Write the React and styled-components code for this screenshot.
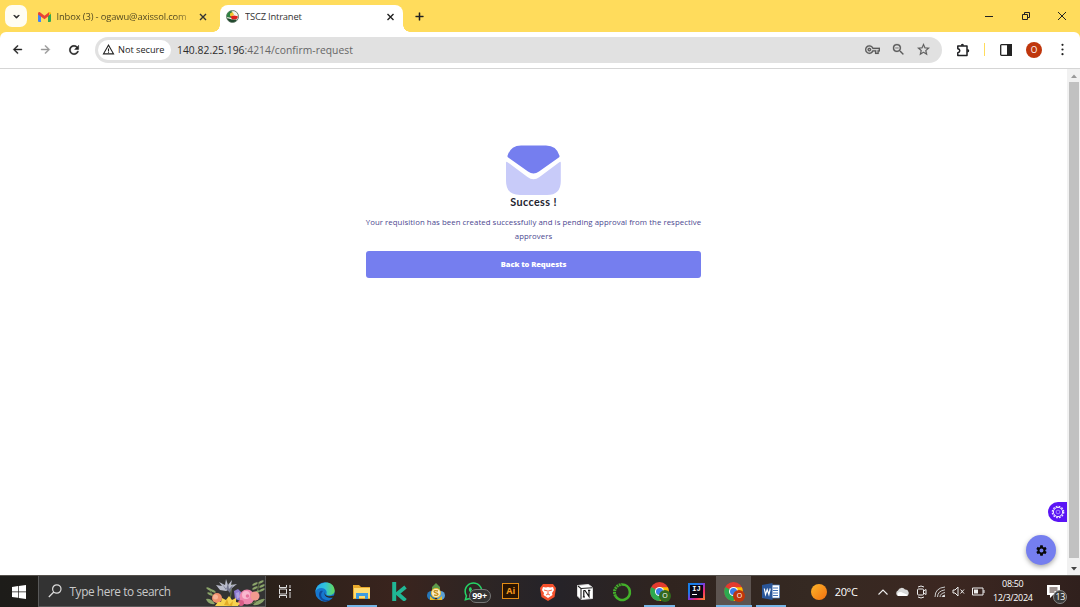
import React from 'react';
import styled, { createGlobalStyle } from 'styled-components';
import {
  MdArrowBack, MdArrowForward, MdRefresh, MdWarningAmber, MdOutlineVpnKey, MdZoomOut,
  MdStarBorder, MdSettings, MdAdd, MdKeyboardArrowDown,
} from 'react-icons/md';
import { FaWhatsapp } from 'react-icons/fa';

const Global = createGlobalStyle`
  * { box-sizing: border-box; }
  html, body { margin: 0; height: 100%; overflow: hidden; }
  body { font-family: "Open Sans", "Noto Sans", sans-serif; color: #222; background: #fff; }
  svg { display: block; flex: none; }
`;

const Screen = styled.div`
  width: 1080px;
  height: 607px;
  display: flex;
  flex-direction: column;
  background: #fff;
`;

/* ---------- browser ---------- */
const TabStrip = styled.div`
  height: 32px;
  flex: none;
  display: flex;
  align-items: flex-end;
  background: #ffdc5c;
  padding-left: 5px;
`;
const TabMenu = styled.button`
  width: 22px;
  height: 22px;
  margin: 0 0 5px;
  padding: 0;
  border: 0;
  border-radius: 7px;
  background: #fffdf3;
  display: grid;
  place-items: center;
  color: #222;
  path:not([fill="none"]) { stroke: currentColor; stroke-width: 1.5px; }
`;
const Tab = styled.div`
  position: relative;
  width: ${(p) => p.$width}px;
  height: 27px;
  display: flex;
  align-items: center;
  padding: 0 7px 4px ${(p) => (p.$active ? 6 : 11)}px;
  border-radius: 8px 8px 0 0;
  background: ${(p) => (p.$active ? '#fff' : 'transparent')};
  &::before, &::after {
    content: '';
    display: ${(p) => (p.$active ? 'block' : 'none')};
    position: absolute;
    bottom: 0;
    width: 7px;
    height: 7px;
  }
  &::before { left: -7px; background: radial-gradient(circle at 0 0, transparent 6.5px, #fff 7px); }
  &::after { right: -7px; background: radial-gradient(circle at 100% 0, transparent 6.5px, #fff 7px); }
`;
const TabTitle = styled.span`
  flex: 1;
  margin-left: ${(p) => (p.$fade ? 5.5 : 6)}px;
  overflow: hidden;
  white-space: nowrap;
  font-size: 9.4px;
  line-height: 16px;
  letter-spacing: ${(p) => p.$track}px;
  color: ${(p) => (p.$fade ? 'transparent' : '#333')};
  background: ${(p) => (p.$fade ? 'linear-gradient(90deg, #4c431f 86%, #ffdc5c 103%)' : 'none')};
  background-clip: ${(p) => (p.$fade ? 'text' : 'border-box')};
`;
const NewTab = styled.div`
  margin-left: 10px;
  height: 27px;
  padding-top: 4.5px;
  path:not([fill="none"]) { stroke: #222; stroke-width: 0.8px; }
`;
const WindowButtons = styled.div`
  margin-left: auto;
  height: 32px;
  display: grid;
  grid-template-columns: repeat(3, 36.3px);
  place-items: center;
`;
const Toolbar = styled.div`
  height: 37px;
  flex: none;
  display: flex;
  align-items: center;
  padding-bottom: 1px;
  background: #fff;
  border-bottom: 1px solid #d5d5d5;
  border-radius: 6px 6px 0 0;
`;
const ToolbarBack = styled.div`
  background: linear-gradient(#ffdc5c 50%, #fff 50%);
  flex: none;
`;
const NavButtons = styled.div`
  width: 95px;
  display: flex;
  align-items: center;
  gap: 15px;
  padding-left: 11px;
  path:not([fill="none"]) { stroke: currentColor; stroke-width: 0.8px; }
`;
const AddressBar = styled.div`
  width: 847px;
  height: 26px;
  display: flex;
  align-items: center;
  padding: 0 11px 0 3px;
  border-radius: 13px;
  background: #e1e1e1;
`;
const Security = styled.div`
  width: 73px;
  height: 20px;
  display: flex;
  align-items: center;
  gap: 3px;
  padding-left: 4px;
  border-radius: 10px;
  background: #fff;
  font-size: 9.2px;
  letter-spacing: -0.02px;
  white-space: nowrap;
  color: #222;
`;
const Address = styled.div`
  flex: 1;
  margin-left: 6px;
  font-size: 10.3px;
  color: #666;
  letter-spacing: 0.04px;
  b { font-weight: 400; color: #2b2b2b; }
`;
const AddressIcons = styled.div`
  display: flex;
  align-items: center;
  gap: 10.5px;
  color: #5b5b5b;
  path:not([fill="none"]) { stroke: currentColor; stroke-width: 0.3px; }
`;
const Extras = styled.div`
  flex: 1;
  display: flex;
  align-items: center;
  padding-left: 14px;
  color: #222;
`;
const Divider = styled.i`
  width: 1px;
  height: 13px;
  margin: 0 15px 0 13px;
  background: #ffdc5c;
`;
const Avatar = styled.span`
  width: 16px;
  height: 16px;
  margin: 0 19px 0 14px;
  border-radius: 50%;
  background: #bf360c;
  color: #fff;
  font: 8.5px/16px "Open Sans", sans-serif;
  text-align: center;
`;

/* ---------- page ---------- */
const Viewport = styled.div`
  flex: 1;
  display: flex;
  min-height: 0;
`;
const Page = styled.main`
  position: relative;
  flex: 1;
  display: flex;
  flex-direction: column;
  align-items: center;
  padding-top: 76px;
`;
const Confirmation = styled.section`
  width: 335px;
  display: flex;
  flex-direction: column;
  align-items: center;
`;
const Heading = styled.h1`
  margin: 0;
  font: 700 10.8px/13px Lato, "Open Sans", sans-serif;
  color: #23232f;
  letter-spacing: 0.4px;
  white-space: nowrap;
`;
const Message = styled.p`
  margin: 7px -10px 0;
  font-size: 7.8px;
  font-weight: 500;
  line-height: 14px;
  letter-spacing: 0.06px;
  color: #4c478f;
  text-align: center;
  white-space: nowrap;
`;
const BackButton = styled.button`
  width: 335px;
  height: 26.5px;
  margin: 8px 0 0;
  padding: 0;
  border: 0;
  border-radius: 3px;
  background: #757eef;
  color: #fff;
  font: 800 7.6px/26px "Open Sans", sans-serif;
  letter-spacing: -0.1px;
`;
const Customizer = styled.div`
  position: absolute;
  right: 0;
  top: 433px;
  width: 19px;
  height: 20px;
  padding: 3px 0 0 3px;
  border-radius: 10px 0 0 10px;
  background: #5a14f5;
`;
const SettingsFab = styled.button`
  position: absolute;
  right: 11px;
  top: 466px;
  width: 30px;
  height: 30px;
  padding: 0;
  border: 0;
  border-radius: 50%;
  display: grid;
  place-items: center;
  color: #080808;
  background: #757eef;
  box-shadow: 0 2px 5px rgba(0, 0, 0, 0.35);
`;
const Scrollbar = styled.div`
  width: 13px;
  display: flex;
  flex-direction: column;
  align-items: center;
  padding: 5px 0 4px;
  background: #f1f1f1;
`;
const Thumb = styled.div`
  width: 10px;
  height: 476px;
  margin: 4px 0 auto;
  background: #c1c1c1;
`;

/* ---------- taskbar ---------- */
const Taskbar = styled.footer`
  height: 32px;
  flex: none;
  display: flex;
  background: linear-gradient(90deg, #1d1c19 0, #292019 24%, #3a241e 37%, #2d2524 45%, #252329 51%, #30241f 62%, #352922 75%, #3c2721 88%, #30201d 100%);
  border-top: 1px solid #54504b;
  color: #fff;
`;
const Start = styled.div`
  width: 38px;
  display: grid;
  place-items: center;
`;
const Search = styled.div`
  width: 228px;
  display: flex;
  align-items: center;
  padding-left: 9px;
  background: #333;
  border: 1px solid #595959;
  border-top: 0;
  color: #c9c9c9;
  font-size: 11.8px;
  letter-spacing: -0.39px;
  white-space: nowrap;
  span { flex: 1; margin-left: 7.5px; }
`;
const TaskView = styled.div`
  width: 40.3px;
  display: grid;
  place-items: center;
  padding-right: 2px;
`;
const TaskItem = styled.div`
  position: relative;
  width: 37.2px;
  display: grid;
  place-items: center;
  background: ${(p) => (p.$active ? 'linear-gradient(90deg, transparent 1px, #5d5450 1px, #5d5450 36px, transparent 36px)' : 'none')};
  &::after {
    content: '';
    position: absolute;
    left: ${(p) => (p.$active ? 1 : 3.5)}px;
    right: ${(p) => (p.$active ? 1 : 3.5)}px;
    bottom: 0;
    height: 2px;
    background: ${(p) => (p.$open || p.$active ? '#76b5e6' : 'transparent')};
  }
`;
const CountBadge = styled.span`
  position: absolute;
  left: 13.5px;
  top: 13px;
  width: 22px;
  height: 14px;
  border: 1px solid #777;
  border-radius: 7px;
  background: #333;
  font: 700 9px/12px "Open Sans", sans-serif;
  letter-spacing: -0.3px;
  text-align: center;
`;
const ProfileBadge = styled.span`
  position: absolute;
  left: 18px;
  top: 14px;
  width: 12px;
  height: 12px;
  border-radius: 50%;
  background: ${(p) => p.$color};
  font: 7px/12px "Open Sans", sans-serif;
  text-align: center;
`;
const AiTile = styled.span`
  width: 17px;
  height: 16px;
  margin-bottom: 2px;
  border: 1.5px solid #e48c14;
  background: #2a1400;
  color: #f79a1c;
  font: 700 9px/13px "Open Sans", sans-serif;
  text-align: center;
`;
const IdeaTile = styled.span`
  width: 17px;
  height: 17px;
  padding: 2px;
  background: linear-gradient(135deg, #197de8 30%, #7c3ce0 50%, #f2296b 70%, #f98b2a);
`;
const IdeaInner = styled.span`
  display: block;
  width: 13px;
  height: 13px;
  padding-left: 2px;
  background: #090714;
  font: 700 7px/8px "Liberation Mono", monospace;
  span { display: block; width: 5px; height: 1px; margin-top: 1px; background: #fff; }
`;
const Weather = styled.div`
  display: flex;
  align-items: center;
  gap: 8px;
  margin-left: 21px;
  width: 67px;
  font-size: 11px;
  letter-spacing: -0.35px;
  white-space: nowrap;
`;
const Sun = styled.i`
  width: 16px;
  height: 16px;
  border-radius: 50%;
  background: linear-gradient(135deg, #fdb52a, #f2700f);
`;
const Tray = styled.div`
  display: flex;
  align-items: center;
  gap: 7px;
`;
const Clock = styled.div`
  width: 50px;
  margin-left: 3px;
  padding-top: 1px;
  font-size: 9px;
  line-height: 14px;
  letter-spacing: -0.33px;
  text-align: center;
  white-space: nowrap;
`;
const Notices = styled.div`
  position: relative;
  margin-left: 9.5px;
  padding-top: 9px;
`;
const NoticeCount = styled.span`
  position: absolute;
  left: 6px;
  top: 14px;
  width: 14px;
  height: 14px;
  border-radius: 50%;
  border: 1px solid #888;
  background: #3a3a3a;
  font: 8.8px/12px "Open Sans", sans-serif;
  letter-spacing: -0.4px;
  text-align: center;
`;

/* ---------- drawings ---------- */
const Gmail = () => (
  <svg width="13" height="10" viewBox="0 0 13 10">
    <path d="M0 1.5V9q0 1 1 1h2V4z" fill="#4285f4" />
    <path d="M13 1.5V9q0 1-1 1h-2V4z" fill="#34a853" />
    <path d="M10 4V1l1-.8q2-.7 2 1.6z" fill="#fbbc04" />
    <path d="M0 1.8Q0-.5 2 .3L6.500 3.700 11 .3v3.500L6.500 7.200 0 2.500z" fill="#ea4335" />
  </svg>
);
const SiteIcon = () => (
  <svg width="13" height="13" viewBox="0 0 13 13">
    <circle cx="6.500" cy="6.500" r="6" fill="#f3f3ea" stroke="#58705f" strokeWidth=".9" />
    <path d="M.8 7Q.5 2.500 4.500 1l2 .5L5 5 6 8z" fill="#2f8040" />
    <path d="M4 3.500L6.500 2 8 4.500 6 6.500 4 6z" fill="#f2c52e" />
    <path d="M4.500 6.500L8 5.500l3.800.8Q12 9 10 9.500L6 9.500z" fill="#e0201b" />
    <path d="M1 8l5 1.500 5 .3Q9.500 12.300 6.500 12.300 2.500 12.300 1 8z" fill="#22492f" />
  </svg>
);
const Puzzle = () => (
  <svg width="15" height="14" viewBox="0 0 15 14">
    <path d="M1.800 3H11V12.500H1.800V9.700Q3.800 9.400 3.800 7.750 3.800 6.100 1.800 5.800Z" fill="none" stroke="#1f2023" strokeWidth="1.500" strokeLinejoin="round" />
    <path d="M4.800 2.700a1.600 1.900 0 0 1 3.200 0zM11.300 6.100a1.900 1.600 0 0 1 0 3.300z" fill="#1f2023" />
  </svg>
);
const Envelope = () => (
  <svg width="55" height="50" viewBox="0 0 55 50">
    <path d="M1.500 10.800Q4.500 .5 15 .5H40Q50.500 .5 53.500 10.800 53.700 12 52.800 12.600L33 26.400Q27.500 30.400 22 26.400L2.200 12.600Q1.300 12 1.500 10.800Z" fill="#757eef" />
    <path d="M0 18Q0 16 1.500 17.200L21.500 32Q27.500 36.500 33.500 32L53.300 17.200Q54.800 16 54.800 18V36Q54.800 50 41 50H14Q0 50 0 36Z" fill="#c8cbf9" />
  </svg>
);
const Flower = () => (
  <svg width="60" height="29" viewBox="0 0 60 29">
    <g stroke="#6f8a4a" strokeWidth=".8" fill="none"><path d="M12 26L4 12M50 25l4-18M25 25l2-18M45 27l14-5" /></g>
    <g fill="#8ba46a">
      {[[4, 12], [8, 14], [5, 17], [50, 7], [56, 5], [50, 11], [57, 9], [52, 15], [57, 13]].map(([x, y]) => (
        <ellipse key={`${x}-${y}`} cx={x} cy={y} rx="3" ry="1.200" transform={`rotate(${x < 30 ? 28 : -28} ${x} ${y})`} />
      ))}
      <path d="M1 22q5-1 9 5-7 1-9-5zM48 28q5-6 12-6-4 7-12 6z" />
    </g>
    <path d="M11 8l6 1-3-4 6 3 1-6 2 6 4-5-1 5 6-1-5 4-6 3-6-1z" fill="#b9bccb" />
    <path d="M17 7l4 6 2-7 1 6 4-4-3 8z" fill="#74778f" />
    <circle cx="12" cy="21" r="5" fill="#ee916c" /><circle cx="10.500" cy="20" r="2.500" fill="#f9b497" />
    <path d="M29 14l4-2 3 3v9l-6-2z" fill="#8b7bd1" /><path d="M31 16l3-1 1 5-3 2z" fill="#aea1e2" />
    <circle cx="42" cy="20" r="7.500" fill="#ee86ad" /><circle cx="50" cy="19" r="4.500" fill="#f29a8f" />
    <circle cx="41" cy="18" r="4" fill="#f9b8cf" /><circle cx="42.500" cy="19" r="1.800" fill="#e5729d" />
    <circle cx="36" cy="26" r="3" fill="#d95c86" />
    <path d="M10 29l3-4 3 0 1-4 4 2 3-4 3 4 4-2 0 4 4 1-2 3z" fill="#f7d34e" />
    <path d="M19 28l3-6 2 6 4-4-1 5z" fill="#e2ac26" />
  </svg>
);
const Edge = () => (
  <svg width="20" height="20" viewBox="0 0 20 20">
    <defs>
      <linearGradient id="edgeTop" x1="0" x2="1"><stop offset="0" stopColor="#2aa9ea" /><stop offset=".5" stopColor="#2fc3dc" /><stop offset="1" stopColor="#65d957" /></linearGradient>
    </defs>
    <circle cx="10" cy="10" r="9.700" fill="#1677cf" />
    <path d="M.4 10C1-1.500 19-3.500 19.700 8.500c0 4-4 5.300-7.500 4.500-1.500-.5-.5-1.500-.5-3C11 5 2 4.500.4 10z" fill="url(#edgeTop)" />
    <path d="M8 9c-5 5 1 11 8 8.500-7 5-14-1.500-11.500-7.200C5.500 8.500 7 8.500 8 9z" fill="#104a9b" />
    <path d="M10.500 9.200c-2.500 3.500 2.500 6.500 8 4.300l1.300.3-1 1.700C12 17 7.500 13 10.500 9.200z" fill="#2d241f" />
  </svg>
);
const Folder = () => (
  <svg width="18" height="16" viewBox="0 0 18 16">
    <path d="M0 1h6l2 2h9v12H0z" fill="#e9a92b" /><path d="M1 4h16v10H1z" fill="#ffdb70" />
    <path d="M3 15V9h12v6h-3v-3H6v3z" fill="#3e9be0" />
  </svg>
);
const Kaspersky = () => (
  <svg width="15" height="19" viewBox="0 0 15 19" fill="none" stroke="#20b795" strokeWidth="4">
    <path d="M2.200 0v19" /><path d="M13.500 5L5.500 11.500 13.500 18.500" strokeWidth="3.800" />
  </svg>
);
const MetaTrader = () => (
  <svg width="18" height="18" viewBox="0 0 18 18">
    <path d="M5 4l4-4 4 4v4H5z" fill="#5f9b4b" /><circle cx="4.500" cy="12.500" r="4.500" fill="#2777b8" />
    <circle cx="13.500" cy="12.500" r="4.500" fill="#5aa0d4" /><path d="M3 13q6 7 12 0v4H3z" fill="#e5bd29" />
    <circle cx="9" cy="10" r="5" fill="#f1c13a" /><circle cx="9" cy="10" r="4" fill="#f9efc8" />
    <path d="M11 8q-4-1-4 .6c0 1.700 4 1 4 2.800q-1 1.600-4 .4" fill="none" stroke="#c8901f" strokeWidth="1.300" />
  </svg>
);
const Brave = () => (
  <svg width="16" height="18" viewBox="0 0 16 18">
    <path d="M3 1h10l3 4-1.500 9L8 18l-6.500-4L0 5z" fill="#f4512c" />
    <path d="M3 4l3 .5 2-.5 2 .5 3-.5 1 3-2 3 .5 2L8 15l-4.500-3L4 10 2 7z" fill="#fff" />
    <path d="M4 7l3 .8M12 7L9 7.800M8 7v4M6 12l2-1 2 1" stroke="#f4512c" strokeWidth=".9" fill="none" />
  </svg>
);
const Notion = () => (
  <svg width="16" height="16" viewBox="0 0 16 16">
    <path d="M.5 1.500L11.500.5 15.500 3.500V14.500L4 15.500.5 12z" fill="#fff" stroke="#ddd" />
    <path d="M1 2l3 2.500v10.800M4 4.500l11.500-.8" fill="none" stroke="#222" strokeWidth="1.100" />
    <path d="M6.500 6.500h1.500l4 6V6.300M6.800 6.500v6.500M5.800 13h2.200M11 6.300h2.300" fill="none" stroke="#111" strokeWidth="1.200" />
  </svg>
);
const Anaconda = () => (
  <svg width="20" height="20" viewBox="0 0 20 20" fill="none" stroke="#43b02a">
    <path d="M10 2.500A7.700 7.700 0 1 1 3.500 14" strokeWidth="2.600" />
    <path d="M3.500 14A7.700 7.700 0 0 1 10 2.500" strokeWidth="3" strokeDasharray="1.800 .7" />
  </svg>
);
const Chrome = () => (
  <svg width="19" height="19" viewBox="0 0 19 19">
    <circle cx="9.500" cy="9.500" r="9.400" fill="#e33b2e" />
    <path d="M9.500 9.500L1.300 4.900A9.400 9.400 0 0 0 9.500 18.900L13.500 12z" fill="#2da94f" />
    <path d="M9.500 5.200h8.300A9.400 9.400 0 0 1 9.500 18.900l4-7z" fill="#fdbd00" />
    <circle cx="9.500" cy="9.500" r="4.500" fill="#fff" /><circle cx="9.500" cy="9.500" r="3.500" fill="#3a7de8" />
  </svg>
);
const Word = () => (
  <svg width="18" height="17" viewBox="0 0 18 17">
    <path d="M9 2h8.500v13H9z" fill="#fff" stroke="#4c83c7" strokeWidth=".7" />
    <path d="M11 5h5M11 7.500h5M11 10h5M11 12.500h5" stroke="#3e6fb5" />
    <path d="M0 2l10.500-2v17L0 15z" fill="#2a5699" />
    <path d="M2.300 5.500l1.200 6 1.700-5 1.700 5 1.300-6" fill="none" stroke="#fff" strokeWidth="1.200" />
  </svg>
);

const apps = [
  { id: 'edge', icon: <Edge /> },
  { id: 'files', icon: <Folder />, open: true },
  { id: 'kaspersky', icon: <Kaspersky /> },
  { id: 'metatrader', icon: <MetaTrader /> },
  { id: 'whatsapp', icon: <><FaWhatsapp size={21} color="#25d366" /><CountBadge>99+</CountBadge></> },
  { id: 'illustrator', icon: <AiTile>Ai</AiTile> },
  { id: 'brave', icon: <Brave /> },
  { id: 'notion', icon: <Notion /> },
  { id: 'anaconda', icon: <Anaconda /> },
  { id: 'chrome', icon: <><Chrome /><ProfileBadge $color="#33691e">O</ProfileBadge></>, open: true },
  { id: 'idea', icon: <IdeaTile><IdeaInner>IJ<span /></IdeaInner></IdeaTile> },
  { id: 'chrome-work', icon: <><Chrome /><ProfileBadge $color="#bf360c">O</ProfileBadge></>, active: true },
  { id: 'word', icon: <Word />, open: true },
];

export default function App() {
  return (
    <Screen>
      <Global />
      <TabStrip>
        <TabMenu aria-label="Search tabs"><MdKeyboardArrowDown size={11} /></TabMenu>
        <Tab $width={193}>
          <Gmail />
          <TabTitle $fade $track={-0.13}>Inbox (3) - ogawu@axissol.com</TabTitle>
          <svg width="19" height="12" viewBox="0 0 19 12"><path d="M6 3l6 6M12 3l-6 6" stroke="#333" strokeWidth="1.400" /></svg>
        </Tab>
        <Tab $active $width={183}>
          <SiteIcon />
          <TabTitle $track={-0.19}>TSCZ Intranet</TabTitle>
          <svg width="11" height="12" viewBox="0 0 11 12"><path d="M2.500 3l6 6M8.500 3l-6 6" stroke="#222" strokeWidth="1.400" /></svg>
        </Tab>
        <NewTab><MdAdd size={13} /></NewTab>
        <WindowButtons>
          <svg width="10" height="10"><path d="M1 5.500h8" stroke="#222" /></svg>
          <svg width="10" height="10" fill="none" stroke="#222"><path d="M1.500 3.500h5v5h-5zM3.500 3.500v-2h5v5h-2" /></svg>
          <svg width="10" height="10" stroke="#222"><path d="M1 1l8 8M9 1l-8 8" /></svg>
        </WindowButtons>
      </TabStrip>
      <ToolbarBack>
        <Toolbar>
          <NavButtons>
            <MdArrowBack size={13} />
            <MdArrowForward size={13} color="#999" />
            <MdRefresh size={14} />
          </NavButtons>
          <AddressBar>
            <Security><MdWarningAmber size={13} />Not secure</Security>
            <Address><b>140.82.25.196</b>:4214/confirm-request</Address>
            <AddressIcons>
              <MdOutlineVpnKey size={15} />
              <MdZoomOut size={15} />
              <MdStarBorder size={15} />
            </AddressIcons>
          </AddressBar>
          <Extras>
            <Puzzle />
            <Divider />
            <svg width="12" height="12" viewBox="0 0 12 12"><rect x=".7" y=".7" width="10.600" height="10.600" rx=".8" fill="none" stroke="#222" strokeWidth="1.300" /><path d="M7 0h5v12H7z" fill="#222" /></svg>
            <Avatar>O</Avatar>
            <svg width="3" height="13" viewBox="0 0 3 13" fill="#222"><circle cx="1.500" cy="1.800" r="1.100" /><circle cx="1.500" cy="6.500" r="1.100" /><circle cx="1.500" cy="11.200" r="1.100" /></svg>
          </Extras>
        </Toolbar>
      </ToolbarBack>
      <Viewport>
        <Page>
          <Confirmation>
            <Envelope />
            <Heading>Success !</Heading>
            <Message>
              Your requisition has been created successfully and is pending approval from the respective
              <br />
              approvers
            </Message>
            <BackButton>Back to Requests</BackButton>
          </Confirmation>
          <Customizer>
            <svg width="14" height="14" viewBox="0 0 14 14" fill="none" stroke="#ece4ff">
              <circle cx="7" cy="7" r="5.600" strokeWidth="1.500" strokeDasharray="1.700 1.230" />
              <circle cx="7" cy="7" r="4.600" /><circle cx="7" cy="7" r="1.900" strokeWidth=".8" stroke="#b79cff" />
            </svg>
          </Customizer>
          <SettingsFab aria-label="Settings"><MdSettings size={13} /></SettingsFab>
        </Page>
        <Scrollbar>
          <svg width="6" height="4"><path d="M0 4l3-3.500L6 4z" fill="#999" /></svg>
          <Thumb />
          <svg width="6" height="4"><path d="M0 0l3 3.500L6 0z" fill="#444" /></svg>
        </Scrollbar>
      </Viewport>
      <Taskbar>
        <Start>
          <svg width="14" height="14" viewBox="0 0 14 14" fill="#fff"><path d="M0 2l6-.9v5.500H0zM6.700 1L14 0v6.600H6.700zM0 7.300h6v5.500L0 12zM6.700 7.300H14V14l-7.300-1z" /></svg>
        </Start>
        <Search>
          <svg width="14" height="14" viewBox="0 0 14 14" fill="none" stroke="#ddd" strokeWidth="1.200"><circle cx="8.800" cy="5" r="4.200" /><path d="M5.800 8L.8 13" /></svg>
          <span>Type here to search</span>
          <Flower />
        </Search>
        <TaskView>
          <svg width="14" height="13" viewBox="0 0 14 13" fill="none" stroke="#ddd"><path d="M1.500 0v2.500h7V0M1.500 13v-2.500h7V13M1.500 4v5h7V4zM12 0v3M12 7v6" /><path d="M11 4h2v2h-2z" fill="#ddd" stroke="none" /></svg>
        </TaskView>
        {apps.map((a) => (
          <TaskItem key={a.id} $open={a.open} $active={a.active}>{a.icon}</TaskItem>
        ))}
        <Weather><Sun />20°C</Weather>
        <Tray>
          <svg width="10" height="6" fill="none" stroke="#eee" strokeWidth="1.100"><path d="M.5 5.500L5 1l4.500 4.500" /></svg>
          <svg width="14" height="9" viewBox="0 0 14 9"><path d="M3 9a3 3 0 0 1 0-5.500 4 4 0 0 1 7-1A3.500 3.500 0 0 1 12 9z" fill="#d8d8d8" /><path d="M3 9q-2-4 3-4l7 3q-1 1-2 1z" fill="#fff" /></svg>
          <svg width="11" height="14" viewBox="0 0 11 14" fill="none" stroke="#eee"><rect x="1.500" y="4" width="6" height="6" rx="1" /><path d="M7.500 6l2.500-1.500v5L7.500 8M2 2q3-2 6 0M2 12q3 2 6 0" /></svg>
          <svg width="11" height="11" viewBox="0 0 11 11" fill="none" stroke="#ccc"><path d="M1 11Q1 2 11 1M3.500 11Q3.500 5 11 3.800M6 11Q6 7.500 11 6.500" /><path d="M8 11q0-1.500 3-2v2z" fill="#fff" /></svg>
          <svg width="13" height="11" viewBox="0 0 13 11" fill="none" stroke="#eee"><path d="M1 4h2l3-3v9L3 7H1zM8.500 3.500l3.500 4M12 3.500l-3.500 4" /></svg>
          <svg width="13" height="9" viewBox="0 0 13 9"><path d="M.5 1h10.500v7H.5zM12 3v3" fill="none" stroke="#eee" /><path d="M2 2.500h4v4H2z" fill="#eee" /></svg>
        </Tray>
        <Clock>08:50<br />12/3/2024</Clock>
        <Notices>
          <svg width="14" height="14" viewBox="0 0 14 14"><path d="M0 0h13v10H6l-3 3v-3H0z" fill="#fff" /><path d="M2.500 3h8M2.500 5h8M2.500 7h5" stroke="#3c2721" /></svg>
          <NoticeCount>13</NoticeCount>
        </Notices>
      </Taskbar>
    </Screen>
  );
}
